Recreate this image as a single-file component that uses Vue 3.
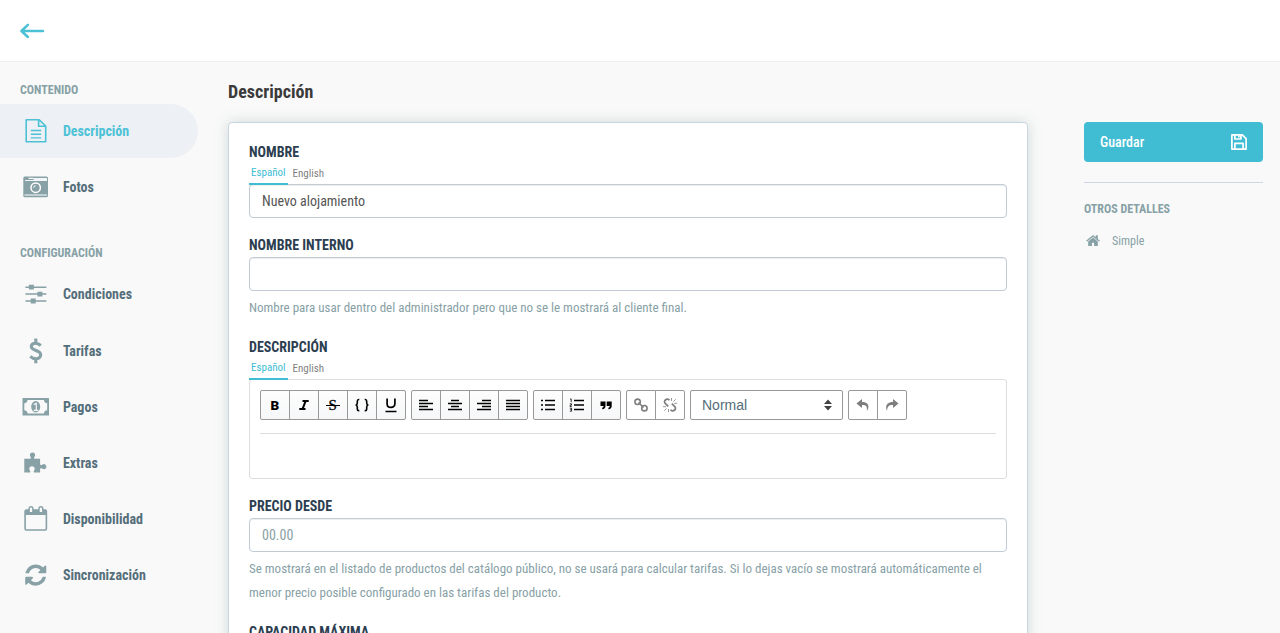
<script setup>
import { ref } from 'vue'

const contentItems = [
  { icon: 'document', label: 'Descripción' },
  { icon: 'camera', label: 'Fotos' },
]

const configItems = [
  { icon: 'sliders', label: 'Condiciones' },
  { icon: 'dollar', label: 'Tarifas' },
  { icon: 'money', label: 'Pagos' },
  { icon: 'puzzle', label: 'Extras' },
  { icon: 'calendar', label: 'Disponibilidad' },
  { icon: 'sync', label: 'Sincronización' },
]

const sections = [
  { title: 'Contenido', items: contentItems },
  { title: 'Configuración', items: configItems },
]

const current = ref('Descripción')
const name = ref('Nuevo alojamiento')
const internalName = ref('')
const price = ref('')
const nameLang = ref('Español')
const descriptionLang = ref('Español')
const languages = ['Español', 'English']
</script>

<template>
  <div class="page">
    <header class="topbar">
      <a class="back">
        <svg width="26" height="18" viewBox="0 0 26 18" fill="none" stroke="#4cc1d5" stroke-width="2.5" stroke-linecap="round" stroke-linejoin="round">
          <path d="M24 9H2.400M8.900 2.900L2.400 9l6.500 6" />
        </svg>
      </a>
    </header>

    <div class="layout">
      <nav class="sidebar">
        <section v-for="section in sections" :key="section.title" class="nav-section">
          <h4>{{ section.title }}</h4>
          <a
            v-for="item in section.items"
            :key="item.label"
            class="nav-item"
            :class="{ active: item.label === current }"
            @click="current = item.label"
          >
            <svg v-if="item.icon === 'document'" class="nav-icon" viewBox="0 0 28 28" fill="none" stroke="currentColor" stroke-width="1.6">
              <path d="M4.200 2.800h13l6.500 6.200v15.700H4.200zM16.600 3v6.200h7" stroke-linejoin="round" />
              <path d="M8.800 13.500h10.400M8.800 17.200h10.400M8.800 20.900h10.400" stroke-width="1.4" />
            </svg>
            <svg v-else-if="item.icon === 'camera'" class="nav-icon" viewBox="0 0 28 28">
              <rect x="1.3" y="3.4" width="24.7" height="20.8" rx="1.5" fill="currentColor" />
              <path d="M3 6h3.5V4.8h4.8V6H3zM3 7h8.500V5.100H25V8H3z" fill="#fff" opacity=".9" />
              <path d="M2.5 22h22.5" stroke="#fff" stroke-width="1" />
              <circle cx="13.7" cy="14.7" r="4.7" fill="none" stroke="#fff" stroke-width="1.5" />
              <path d="M11.700 14.700a2 2 0 0 1 2-2" fill="none" stroke="#fff" stroke-width="1" />
            </svg>
            <svg v-else-if="item.icon === 'sliders'" class="nav-icon" viewBox="0 0 28 28" fill="currentColor">
              <path d="M3.400 6.400h21v1.500h-21zM3.400 13.300h21v1.500h-21zM3.400 20.200h21v1.500h-21z" />
              <path d="M6.900 4.800h5v4.800h-5zM15.400 11.700h5v4.800h-5zM8.700 18.600h5v4.800h-5z" />
            </svg>
            <svg v-else-if="item.icon === 'dollar'" class="nav-icon" viewBox="0 0 28 28" fill="none" stroke="currentColor" stroke-width="3.1">
              <path d="M18.800 8.500C17 6.900 15.500 6.300 13.600 6.300 11 6.300 9.300 7.600 9.300 9.600c0 4.900 9.400 3 9.400 8.200 0 2.400-2.100 3.900-4.900 3.900-2.200 0-4-.8-5.500-2.300M13.800 1.600V6M13.800 22v4.200" />
            </svg>
            <svg v-else-if="item.icon === 'money'" class="nav-icon" viewBox="0 0 28 28">
              <rect x=".5" y="5" width="26.5" height="17.5" rx=".5" fill="currentColor" />
              <path d="M5.600 6.900h16.300a3.600 3.600 0 0 0 3.300 3.300v7a3.600 3.600 0 0 0-3.300 3.300H5.600a3.600 3.600 0 0 0-3.300-3.300v-7a3.600 3.600 0 0 0 3.300-3.300z" fill="#f9f9f9" />
              <ellipse cx="13.7" cy="13.7" rx="4.500" ry="5.700" fill="currentColor" />
              <path d="M11.700 11.900l2-1.600h.6v6.800M11.700 17.300h4.500" fill="none" stroke="#f9f9f9" stroke-width="1.2" />
            </svg>
            <svg v-else-if="item.icon === 'puzzle'" class="nav-icon" viewBox="0 0 28 28" fill="currentColor">
              <path d="M2.300 9.800h5.800c1 0 1.100-1 .6-1.700a2.900 2.900 0 0 1-.8-2.100 2.600 2.600 0 0 1 5.200 0c0 .9-.4 1.400-.8 2.100-.5.8-.3 1.700.7 1.700h5.100v4.700c0 1.400 1 2 2 1.300.6-.5 1.200-.8 2.100-.8a2.700 2.700 0 0 1 0 5.300c-.8 0-1.400-.3-2-.7-1-.7-2.100-.2-2.100 1v2.900h-5.500c-1 0-1.200-.7-.7-1.500.5-.7.8-1.200.8-2.100a2.700 2.700 0 0 0-5.400 0c0 .9.3 1.400.8 2.100.5.8.3 1.500-.8 1.500H2.300z" />
            </svg>
            <svg v-else-if="item.icon === 'calendar'" class="nav-icon" viewBox="0 0 28 28">
              <rect x="3.1" y="5.1" width="21.3" height="19.9" rx="1.2" fill="none" stroke="currentColor" stroke-width="1.6" />
              <path d="M3 5h21.500v5H3z" fill="currentColor" />
              <path d="M7.100 3.600a1.900 1.900 0 0 1 3.800 0v4.200H7.100zM17 3.600a1.900 1.900 0 0 1 3.800 0v4.200H17z" fill="#f9f9f9" stroke="currentColor" stroke-width="1.4" />
            </svg>
            <svg v-else class="nav-icon" viewBox="-233 -260 2040 2040" fill="currentColor">
              <path d="M1511 928q0 5-1 7-64 268-268 434.500T764 1536q-146 0-282.500-55T238 1324l-129 129q-19 19-45 19t-45-19-19-45V960q0-26 19-45t45-19h448q26 0 45 19t19 45-19 45l-137 137q71 66 161 102t187 36q134 0 250-65t186-179q11-17 53-117 8-23 30-23h192q13 0 22.500 9.500t9.500 22.500zm25-800v448q0 26-19 45t-45 19h-448q-26 0-45-19t-19-45 19-45l138-138Q969 256 768 256q-134 0-250 65T332 500q-11 17-53 117-8 23-30 23H50q-13 0-22.500-9.500T18 608v-7q65-268 270-434.500T768 0q146 0 284 55.500T1297 212l130-129q19-19 45-19t45 19 19 45z" />
            </svg>
            <span>{{ item.label }}</span>
          </a>
        </section>
      </nav>

      <main class="content">
        <h1>Descripción</h1>
        <div class="card">
          <div class="field">
            <label>Nombre</label>
            <div class="tabs">
              <a v-for="lang in languages" :key="lang" :class="{ active: lang === nameLang }" @click="nameLang = lang">{{ lang }}</a>
            </div>
            <input v-model="name" type="text" />
          </div>

          <div class="field">
            <label class="spaced">Nombre interno</label>
            <input v-model="internalName" type="text" />
            <p class="help">Nombre para usar dentro del administrador pero que no se le mostrará al cliente final.</p>
          </div>

          <div class="field">
            <label>Descripción</label>
            <div class="tabs">
              <a v-for="lang in languages" :key="lang" :class="{ active: lang === descriptionLang }" @click="descriptionLang = lang">{{ lang }}</a>
            </div>
            <div class="editor">
              <div class="toolbar">
                <div class="group">
                  <button><svg viewBox="0 0 16 16"><text x="3.500" y="12.500" class="glyph-b">B</text></svg></button>
                  <button><svg viewBox="0 0 16 16"><path d="M6.500 3.900h6.200M3.300 12.100h6.200M9.700 3.900L6.500 12.100" fill="none" stroke="#000" stroke-width="2" /></svg></button>
                  <button><svg viewBox="0 0 16 16"><text x="3.500" y="13.200" class="glyph-s">S</text><path d="M1 8.500h14" stroke="#000" /></svg></button>
                  <button>
                    <svg viewBox="0 0 16 16" fill="none" stroke="#000" stroke-width="1.600">
                      <path d="M5.300 2.500H4.700C3.500 2.500 3.300 3.200 3.300 4.200v1.700c0 1.200-.5 1.900-1.600 2.100 1.100.2 1.600.9 1.600 2.100v1.800c0 1 .2 1.700 1.400 1.700h.6M10.700 2.500h.6c1.200 0 1.400.7 1.400 1.700v1.700c0 1.200.5 1.900 1.600 2.100-1.100.2-1.600.9-1.600 2.100v1.800c0 1-.2 1.700-1.400 1.700h-.6" />
                    </svg>
                  </button>
                  <button>
                    <svg viewBox="0 0 16 16" fill="none" stroke="#000">
                      <path d="M4.100 1.500v5.200c0 5 7.800 5 7.800 0V1.500" stroke-width="1.700" /><path d="M2.500 14.500h11" stroke-width="1.500" />
                    </svg>
                  </button>
                </div>
                <div class="group">
                  <button><svg viewBox="0 0 16 16"><path d="M1 3.500h9M1 6.500h14M1 9.500h9M1 12.500h14" class="line" /></svg></button>
                  <button><svg viewBox="0 0 16 16"><path d="M4 3.500h8M1 6.500h14M4 9.500h8M1 12.500h14" class="line" /></svg></button>
                  <button><svg viewBox="0 0 16 16"><path d="M6 3.500h9M1 6.500h14M6 9.500h9M1 12.500h14" class="line" /></svg></button>
                  <button><svg viewBox="0 0 16 16"><path d="M1 3.500h14M1 6.500h14M1 9.500h14M1 12.500h14" class="line" /></svg></button>
                </div>
                <div class="group">
                  <button><svg viewBox="0 0 16 16"><path d="M5 3.500h10M5 8h10M5 12.500h10M1 3.500h2M1 8h2M1 12.500h2" class="line" /></svg></button>
                  <button><svg viewBox="0 0 16 16"><path d="M5 3.500h10M5 8h10M5 12.500h10" class="line" /><path d="M1 2h1.200v3.200M.8 6.800h1.700v1.400H1.100v1.300h1.600M.8 11.200h1.800v3H.8M1.100 12.700h1.500" fill="none" stroke="#000" stroke-width=".8" /></svg></button>
                  <button><svg viewBox="0 0 16 16"><path d="M2.500 4.500h5v4.300c0 2.100-1 3.300-3.300 3.500v-1.500c1-.3 1.400-.9 1.400-1.800H2.500zM8.700 4.500h5v4.300c0 2.100-1 3.300-3.300 3.500v-1.500c1-.3 1.400-.9 1.400-1.800H8.700z" /></svg></button>
                </div>
                <div class="group disabled">
                  <button><svg viewBox="0 0 16 16" fill="none" stroke="#000" stroke-width="1.600"><circle cx="4.600" cy="4.800" r="2.700" /><circle cx="11.400" cy="11.200" r="2.700" /><path d="M5.500 5.500l5 5" /></svg></button>
                  <button>
                    <svg viewBox="0 0 16 16" fill="none" stroke="#000" stroke-width="1.700">
                      <path d="M7.500 3.200C4.500.7 1 4.100 3.200 6.400l3 3M8.500 12.800c3 2.500 6.500-.9 4.300-3.200l-3-3" />
                      <path d="M9.500 4V1M11.500 4.500l2.200-2.200M12.200 6.300h3M6.500 12v3M4.500 11.500l-2.200 2.200M4 9.700H1" stroke-width=".8" />
                    </svg>
                  </button>
                </div>
                <div class="select">
                  <span>Normal</span>
                  <svg width="8" height="12" viewBox="0 0 8 12" fill="#444"><path d="M4 .5L8 5H0zM4 11.500L0 7h8z" /></svg>
                </div>
                <div class="group disabled">
                  <button><svg viewBox="0 0 16 16"><path d="M7 2L1.500 6.500 7 11V8c3.500-.2 5.600.7 4.800 6C15 9.500 13.500 5 7 5z" /></svg></button>
                  <button><svg viewBox="0 0 16 16"><path d="M9 2l5.500 4.500L9 11V8c-3.500-.2-5.600.7-6 6C1 9.500 2.500 5 9 5z" /></svg></button>
                </div>
              </div>
              <div class="editor-body"></div>
            </div>
          </div>

          <div class="field">
            <label class="spaced">Precio desde</label>
            <input v-model="price" type="text" placeholder="00.00" />
            <p class="help">Se mostrará en el listado de productos del catálogo público, no se usará para calcular tarifas. Si lo dejas vacío se mostrará automáticamente el menor precio posible configurado en las tarifas del producto.</p>
          </div>

          <div class="field">
            <label class="spaced">Capacidad máxima</label>
            <input type="text" />
          </div>
        </div>
      </main>

      <aside class="details">
        <button class="save">
          <span>Guardar</span>
          <svg width="18" height="18" viewBox="0 0 18 18" fill="none" stroke="#fff" stroke-width="1.700" stroke-linejoin="round">
            <path d="M1.900 1.900h10.400l3.800 3.800v10.400H1.900zM4.900 2v4h6V2M4.900 16v-5.600h8.200V16" />
            <path d="M8.900 2.500v2" />
          </svg>
        </button>
        <hr />
        <h4>Otros detalles</h4>
        <div class="detail">
          <svg width="14" height="14" viewBox="60 100 1670 1670" fill="currentColor">
            <path d="M1472 992v480q0 26-19 45t-45 19h-384v-384h-256v384h-384q-26 0-45-19t-19-45v-480q0-1 .5-3t.5-3l575-474 575 474q1 2 1 6zm223-69l-62 74q-8 9-21 11h-3q-13 0-21-7l-692-577-692 577q-12 8-24 7-13-2-21-11l-62-74q-8-10-7-23.500t11-21.500l719-599q32-26 76-26t76 26l244 204v-195q0-14 9-23t23-9h192q14 0 23 9t9 23v408l219 182q10 8 11 21.500t-7 23.500z" />
          </svg>
          <span>Simple</span>
        </div>
      </aside>
    </div>
  </div>
</template>

<style>
body {
  margin: 0;
  overflow: hidden;
  background: #f9f9f9;
}
</style>

<style scoped>
.page, .page input, .page button {
  font-family: "Roboto Condensed", Roboto, sans-serif;
  font-stretch: 75%;
}
.page {
  height: 633px;
  overflow: hidden;
  background: #f9f9f9;
  color: #3a3a3a;
  font-size: 14px;
}
.page * {
  box-sizing: border-box;
}
.topbar {
  display: flex;
  align-items: center;
  height: 62px;
  padding-left: 19px;
  background: #fff;
  border-bottom: 1px solid #eee;
}
.back {
  height: 18px;
}
.back svg {
  display: block;
}
.layout {
  display: flex;
  align-items: flex-start;
}
h4 {
  margin: 0;
  color: #87a1a6;
  font-size: 12px;
  line-height: 16px;
  font-weight: bold;
  text-transform: uppercase;
}

/* menu lateral */
.sidebar {
  width: 198px;
  padding-top: 20px;
}
.nav-section {
  margin-bottom: 31px;
}
.nav-section h4 {
  padding-left: 20px;
  margin-bottom: 6px;
}
.nav-item {
  display: flex;
  align-items: center;
  height: 54.2px;
  margin-bottom: 2px;
  padding-left: 21.500px;
  border-radius: 0 27px 27px 0;
  color: #546e7a;
  font-weight: bold;
}
.nav-item.active {
  background: #edf1f5;
  color: #4cc1d5;
}
.nav-icon {
  width: 28px;
  height: 28px;
  margin-right: 13.400px;
  color: #87a1a6;
}
.active .nav-icon {
  color: #4cc1d5;
}

/* formulario */
.content {
  width: 800px;
  margin-left: 30px;
}
h1 {
  margin: 18px 0 18px;
  font-size: 18px;
  line-height: 24px;
}
.card {
  padding: 20px;
  background: #fff;
  border: 1px solid #c8d5e3;
  border-radius: 4px;
  box-shadow: 0 0 14px rgba(100, 130, 130, 0.25);
}
.field {
  margin-bottom: 18px;
}
label {
  display: block;
  height: 17px;
  line-height: 18px;
  color: #2c3e50;
  font-weight: bold;
  text-transform: uppercase;
}
label.spaced {
  line-height: 19px;
  margin-bottom: 4px;
}
.tabs {
  display: flex;
  height: 24px;
  font-size: 11px;
}
.tabs a {
  padding: 0 3px;
  line-height: 28px;
  color: #7f7f7f;
}
.tabs a.active {
  position: relative;
  z-index: 1;
  height: 25px;
  padding: 0 2px;
  margin-right: 2px;
  line-height: 26px;
  color: #41bdd3;
  border-bottom: 2px solid #41bdd3;
}
input {
  display: block;
  width: 100%;
  height: 34px;
  padding: 0 12px;
  border: 1px solid #c0cbd5;
  border-radius: 4px;
  background: #fff;
  box-shadow: inset 0 1px 1px rgba(0, 0, 0, 0.075);
  color: #555;
  font-size: 14px;
  outline: none;
}
input::placeholder {
  color: #87a1a6;
}
.help {
  margin: 5px 0 0;
  color: #87a1a6;
  font-size: 13px;
  line-height: 24px;
}
.editor {
  height: 100px;
  padding: 10px;
  border: 1px solid #ddd;
  border-radius: 3px;
}
.toolbar {
  display: flex;
  gap: 5px;
  height: 44px;
  border-bottom: 1px solid #ddd;
}
.group {
  display: flex;
}
.group button {
  display: flex;
  align-items: center;
  justify-content: center;
  width: 30px;
  height: 30px;
  margin: 0 0 0 -1px;
  padding: 0;
  border: 1px solid #999;
  background: linear-gradient(#fdfdfd, #f6f7f8);
}
.group button:first-child {
  margin-left: 0;
  border-radius: 2px 0 0 2px;
}
.group button:last-child {
  border-radius: 0 2px 2px 0;
}
.group svg {
  width: 16px;
  height: 16px;
}
.group.disabled button {
  background: #fff;
}
.group.disabled svg {
  opacity: 0.5;
}
.line {
  stroke: #000;
  stroke-width: 1.5;
}
.glyph-b {
  font: 900 13.500px Roboto, sans-serif;
}
.glyph-s {
  font: 15px "Liberation Serif", serif;
  stroke: #000;
  stroke-width: 0.3px;
}
.select {
  display: flex;
  align-items: center;
  justify-content: space-between;
  width: 153px;
  height: 30px;
  padding: 0 10px 0 11px;
  border: 1px solid #999;
  border-radius: 2px;
  color: #546e7a;
  font: 14px "Liberation Sans", Arial, sans-serif;
}

/* columna derecha */
.details {
  width: 179px;
  margin: 60px 0 0 56px;
}
.save {
  display: flex;
  align-items: center;
  justify-content: space-between;
  width: 100%;
  height: 40px;
  padding: 0 15px 0 16px;
  border: 0;
  border-radius: 4px;
  background: #41bdd3;
  color: #fff;
  font-size: 14px;
  font-weight: 500;
}
hr {
  height: 1px;
  margin: 20px 0 18px;
  border: 0;
  background: #cdd6e2;
}
.detail {
  display: flex;
  align-items: center;
  gap: 12px;
  height: 16px;
  margin-top: 16px;
  padding-left: 2px;
  color: #87a1a6;
  font-size: 12px;
}
</style>
